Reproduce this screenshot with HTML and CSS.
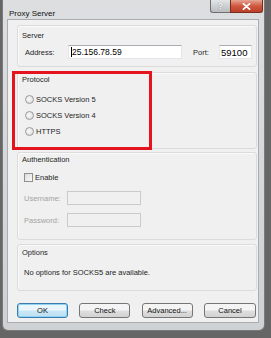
FILE: index.html
```html
<!DOCTYPE html>
<html lang="en">
<head>
    <meta charset="UTF-8">
    <meta name="viewport" content="width=device-width, initial-scale=1.0">
    <title>Proxy Server</title>
    <link rel="stylesheet" href="styles.css">
</head>
<body>

    <div class="window">
        <div class="titlebar">
            <span class="title">Proxy Server</span>
            <div class="caption-buttons">
                <span class="cap-btn help">?</span>
                <span class="cap-btn close">
                    <svg width="9" height="7" viewBox="0 0 9 7"><path d="M1.5 0.8 L7.5 6.2 M7.5 0.8 L1.5 6.2" stroke="#fff" stroke-width="1.8" stroke-linecap="round"/></svg>
                </span>
            </div>
        </div>

        <div class="client">
            <div class="group server">
                <div class="legend">Server</div>
                <div class="field-row">
                    <span class="field-label">Address:</span>
                    <span class="textbox address"><span class="caret"></span>25.156.78.59</span>
                    <span class="field-label port-label">Port:</span>
                    <span class="textbox port">59100</span>
                </div>
            </div>

            <div class="group protocol">
                <div class="legend">Protocol</div>
                <div class="radio-list">
                    <div class="option"><span class="radio"></span>SOCKS Version 5</div>
                    <div class="option"><span class="radio"></span>SOCKS Version 4</div>
                    <div class="option"><span class="radio"></span>HTTPS</div>
                </div>
            </div>

            <div class="group auth">
                <div class="legend">Authentication</div>
                <div class="check-row"><span class="checkbox"></span>Enable</div>
                <div class="field-row disabled">
                    <span class="field-label">Username:</span>
                    <span class="textbox small"></span>
                </div>
                <div class="field-row disabled">
                    <span class="field-label">Password:</span>
                    <span class="textbox small"></span>
                </div>
            </div>

            <div class="group options">
                <div class="legend">Options</div>
                <p class="note">No options for SOCKS5 are available.</p>
            </div>

            <div class="buttons">
                <span class="button default">OK</span>
                <span class="button">Check</span>
                <span class="button">Advanced...</span>
                <span class="button">Cancel</span>
            </div>
        </div>
    </div>

    <!-- red highlight drawn over the dialog -->
    <div class="highlight"></div>

</body>
</html>
```

FILE: styles.css
```css
body {
    margin: 0;
    height: 338px;
    overflow: hidden;
    position: relative;
    background-color: #666;
    font-family: "Liberation Sans", Arial, sans-serif;
    font-size: 7.5px;
    color: #1e1e1e;
}

.window {
    margin-left: 2px;
    width: 263px;
    height: 331px;
    box-sizing: border-box;
    background: linear-gradient(#dcdee0, #cfd2d5);
    border: 1px solid #7a7a7a;
    border-top: none;
    border-radius: 0 0 6px 6px;
}

.titlebar {
    height: 19px;
    display: flex;
    align-items: flex-start;
}

.title {
    padding: 9px 0 0 6px;
    font-size: 8px;
    line-height: 10px;
    color: #111;
}

.caption-buttons {
    margin-left: auto;
    margin-right: 1px;
    display: flex;
}

.cap-btn {
    height: 13px;
    box-sizing: border-box;
    display: flex;
    align-items: center;
    justify-content: center;
    border: 1px solid #6f6f6f;
    border-top: none;
}

.help {
    width: 20px;
    border-right: none;
    border-radius: 0 0 0 3px;
    background: linear-gradient(#e2e4e6, #b9bdc1);
    color: #fff;
    font-weight: bold;
    font-size: 9px;
    text-shadow: 0 0 1px #555;
}

.close {
    width: 33px;
    border-color: #7c2a1c;
    border-radius: 0 0 3px 0;
    background: linear-gradient(#e6a594, #d0583f 50%, #b9402a);
}

.client {
    margin: 0 5px 0 4px;
    height: 304px;
    box-sizing: border-box;
    padding: 5px 1px 0 9px;
    background-color: #f0f0f0;
    border: 1px solid #a9adb1;
}

.group {
    border: 1px solid #dbdbdb;
    border-radius: 3px;
    box-shadow: inset 1px 1px 0 #fafafa;
}

.legend {
    line-height: 10px;
    padding-left: 4px;
}

.server {
    padding: 5px 0 7px 0;
}

.protocol {
    margin-top: 5px;
    padding: 2px 0 9px 0;
}

.auth {
    margin-top: 3px;
    padding: 2px 0 12px 0;
}

.options {
    margin-top: 4px;
    padding: 3px 0 12px 0;
}

.field-row {
    display: flex;
    align-items: center;
    height: 14px;
    margin-top: 4px;
    padding-left: 7px;
}

.field-label {
    width: 43px;
}

.port-label {
    width: 26px;
    margin-left: 11px;
}

.textbox {
    height: 14px;
    box-sizing: border-box;
    display: flex;
    align-items: center;
    padding-left: 2px;
    background-color: #fff;
    border: 1px solid #e2e6ea;
    border-top-color: #aaadb2;
    color: #000;
    font-size: 8.5px;
}

.address {
    width: 114px;
}

.port {
    width: 33px;
    font-size: 9.5px;
    padding-left: 1px;
}

.caret {
    width: 1px;
    height: 10px;
    background-color: #000;
}

.radio-list {
    margin-top: 6px;
}

.option {
    height: 16px;
    display: flex;
    align-items: center;
    padding-left: 7px;
}

.option:last-child {
    height: 16px;
}

.radio {
    width: 9px;
    height: 9px;
    box-sizing: border-box;
    margin-right: 2px;
    border-radius: 50%;
    border: 1px solid #9a9a9a;
    background: radial-gradient(circle at 40% 40%, #fafafa, #d6d6d6);
}

.check-row {
    height: 11px;
    margin-top: 7px;
    padding-left: 6px;
    display: flex;
    align-items: center;
}

.checkbox {
    width: 9px;
    height: 9px;
    box-sizing: border-box;
    margin-right: 2px;
    border: 1px solid #8e8f8f;
    background: linear-gradient(135deg, #dcdcdc, #fbfbfb);
}

.auth .field-row {
    margin-top: 8px;
    padding-left: 6px;
}

.disabled {
    color: #a3a3a3;
}

.disabled .textbox {
    background-color: #f0f0f0;
    border-color: #cacaca;
}

.small {
    width: 74px;
}

.note {
    margin: 10px 0 0 0;
    padding-left: 6px;
    line-height: 10px;
}

.buttons {
    margin-top: 12px;
    width: 239px;
    display: flex;
    justify-content: space-between;
}

.button {
    width: 51px;
    height: 15px;
    box-sizing: border-box;
    display: flex;
    align-items: center;
    justify-content: center;
    border: 1px solid #767676;
    border-radius: 3px;
    background: linear-gradient(#f4f4f4 45%, #dedede 55%, #d2d2d2);
    color: #111;
}

.buttons .button:last-child {
    width: 52px;
}

.default {
    border-color: #3b7cb0;
    box-shadow: inset 0 0 0 1px #8fd3f2;
    background: linear-gradient(#eaf6fc 45%, #c8e6f5 55%, #bfe0f1);
}

.highlight {
    position: absolute;
    left: 12px;
    top: 71px;
    width: 140px;
    height: 79px;
    box-sizing: border-box;
    border: 3px solid #e5131d;
}
```
